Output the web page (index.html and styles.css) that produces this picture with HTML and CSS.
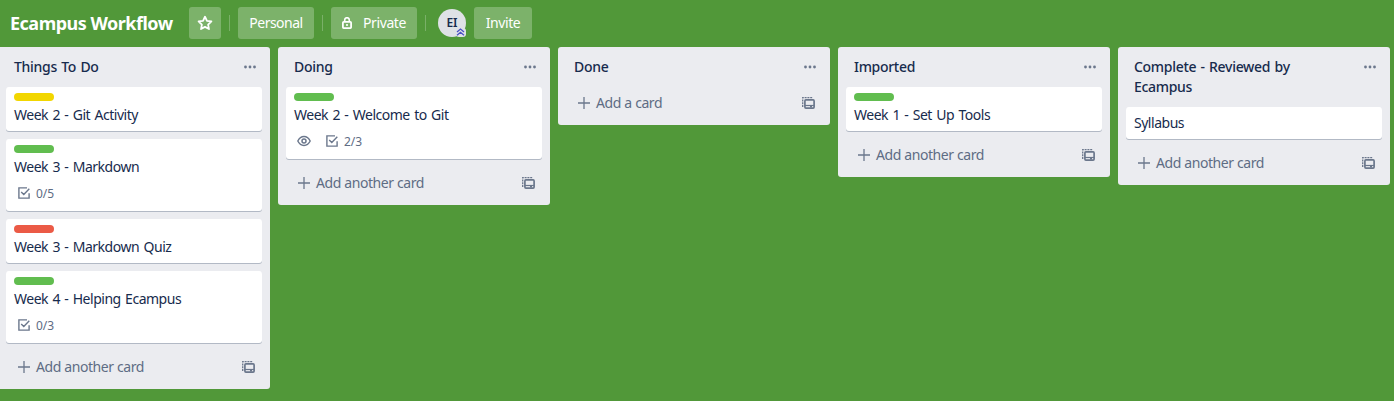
FILE: index.html
```html
<!DOCTYPE html>
<html lang="en">
<head>
<meta charset="utf-8">
<title>Ecampus Workflow</title>
<link rel="stylesheet" href="styles.css">
</head>
<body>
<svg class="defs" aria-hidden="true">
  <symbol id="check" viewBox="0 0 12 12"><path d="M9 .9H.9v10.2h10.2V6.2M3.2 4.9l2.600 2.600 5.500-5.800" fill="none" stroke="currentColor" stroke-width="1.400"/></symbol>
  <symbol id="eye" viewBox="0 0 14 12"><path d="M.8 6C2.200 3.200 4.400 1.500 7 1.500S11.800 3.200 13.200 6C11.800 8.800 9.600 10.500 7 10.500S2.200 8.800.8 6z" fill="none" stroke="currentColor" stroke-width="1.400"/><circle cx="7" cy="6" r="2" fill="none" stroke="currentColor" stroke-width="1.500"/></symbol>
  <symbol id="plus" viewBox="0 0 12 12"><path d="M6 0v12M0 6h12" stroke="currentColor" stroke-width="1.300"/></symbol>
  <symbol id="template" viewBox="0 0 13 12"><path d="M.7 10V.7H10.500" fill="none" stroke="currentColor" stroke-width="1.300" stroke-dasharray="2 .8"/><rect x="2.900" y="2.900" width="9.200" height="8.200" rx="1" fill="none" stroke="currentColor" stroke-width="1.700"/><path d="M3 8.500h9" stroke="currentColor" stroke-width="1.200"/><path d="M8 9h2v1.500H8z" fill="currentColor"/></symbol>
  <symbol id="dots" viewBox="0 0 14 4"><circle cx="2.500" cy="2" r="1.400" fill="currentColor"/><circle cx="7" cy="2" r="1.400" fill="currentColor"/><circle cx="11.500" cy="2" r="1.400" fill="currentColor"/></symbol>
</svg>
<header class="topbar">
  <h1 class="title">Ecampus Workflow</h1>
  <button class="btn star"><svg width="16" height="16" viewBox="0 0 14 14"><path d="M7 1.500l1.700 3.600 3.900.5-2.850 2.750.7 3.950L7 10.400l-3.450 1.900.7-3.950L1.400 5.600l3.900-.5z" fill="none" stroke="#fff" stroke-width="1.600" stroke-linejoin="round"/></svg></button>
  <span class="divider"></span>
  <button class="btn personal">Personal</button>
  <span class="divider"></span>
  <button class="btn private"><svg width="10" height="12" viewBox="0 0 10 12"><rect x=".9" y="4.900" width="8.200" height="6.200" rx=".8" fill="none" stroke="#fff" stroke-width="1.800"/><path d="M2.700 4.800V3a2.300 2.300 0 0 1 4.600 0v1.800" fill="none" stroke="#fff" stroke-width="1.600"/><circle cx="5" cy="8" r="1.100" fill="#fff"/></svg><span>Private</span></button>
  <span class="divider"></span>
  <div class="avatar">EI<span class="admin"><svg width="9" height="8" viewBox="0 0 9 8"><path d="M1 4l3.500-3L8 4M1 7.300l3.500-3 3.500 3" fill="none" stroke="#4a4fc4" stroke-width="1.300"/></svg></span></div>
  <button class="btn invite">Invite</button>
</header>
<main class="board">
  <section class="list">
    <div class="list-head"><h2>Things To Do</h2><svg class="menu"><use href="#dots"/></svg></div>
    <article class="card"><span class="label yellow"></span><p>Week 2 - Git Activity</p></article>
    <article class="card"><span class="label green"></span><p>Week 3 - Markdown</p><div class="badges"><svg class="check"><use href="#check"/></svg><span>0/5</span></div></article>
    <article class="card"><span class="label red"></span><p>Week 3 - Markdown Quiz</p></article>
    <article class="card"><span class="label green"></span><p>Week 4 - Helping Ecampus</p><div class="badges"><svg class="check"><use href="#check"/></svg><span>0/3</span></div></article>
    <div class="add"><svg class="plus"><use href="#plus"/></svg><span>Add another card</span><svg class="template"><use href="#template"/></svg></div>
  </section>
  <section class="list">
    <div class="list-head"><h2>Doing</h2><svg class="menu"><use href="#dots"/></svg></div>
    <article class="card"><span class="label green"></span><p>Week 2 - Welcome to Git</p><div class="badges"><svg class="eye"><use href="#eye"/></svg><svg class="check"><use href="#check"/></svg><span>2/3</span></div></article>
    <div class="add"><svg class="plus"><use href="#plus"/></svg><span>Add another card</span><svg class="template"><use href="#template"/></svg></div>
  </section>
  <section class="list">
    <div class="list-head"><h2>Done</h2><svg class="menu"><use href="#dots"/></svg></div>
    <div class="add"><svg class="plus"><use href="#plus"/></svg><span>Add a card</span><svg class="template"><use href="#template"/></svg></div>
  </section>
  <section class="list">
    <div class="list-head"><h2>Imported</h2><svg class="menu"><use href="#dots"/></svg></div>
    <article class="card"><span class="label green"></span><p>Week 1 - Set Up Tools</p></article>
    <div class="add"><svg class="plus"><use href="#plus"/></svg><span>Add another card</span><svg class="template"><use href="#template"/></svg></div>
  </section>
  <section class="list">
    <div class="list-head"><h2>Complete - Reviewed by Ecampus</h2><svg class="menu"><use href="#dots"/></svg></div>
    <article class="card"><p>Syllabus</p></article>
    <div class="add"><svg class="plus"><use href="#plus"/></svg><span>Add another card</span><svg class="template"><use href="#template"/></svg></div>
  </section>
</main>
</body>
</html>
```
FILE: styles.css
```css
* { box-sizing: border-box; }
body {
  margin: 0;
  height: 401px;
  overflow: hidden;
  background: #519839;
  color: #172b4d;
  font: 14px/20px "Segoe UI", "Noto Sans", sans-serif;
  letter-spacing: -0.45px;
}
h1, h2, p { margin: 0; }
svg { display: block; flex: none; }
.defs { position: absolute; width: 0; height: 0; }

.topbar { display: flex; align-items: center; height: 47px; padding: 0 0 1px 10px; }
.title { width: 179px; font-size: 18px; font-weight: 700; line-height: 24px; color: #fff; letter-spacing: -0.5px; white-space: nowrap; }
.btn {
  display: flex; align-items: center; justify-content: center;
  height: 32px; padding: 0; border: 0; border-radius: 3px;
  background: rgba(255, 255, 255, .25); color: #fff;
  font: inherit;
}
.star { width: 32px; }
.personal { width: 76px; letter-spacing: -0.5px; }
.private { width: 86px; gap: 11px; letter-spacing: -0.4px; }
.invite { width: 58px; margin-left: 8px; letter-spacing: -0.45px; }
.divider { width: 1px; height: 16px; margin: 0 8px; background: rgba(255, 255, 255, .24); }
.avatar {
  position: relative; width: 28px; height: 28px; margin-left: 4px;
  border-radius: 50%; background: #dfe1e6;
  font-size: 12px; font-weight: 600; line-height: 28px; text-align: center; letter-spacing: 0;
}
.admin { position: absolute; right: 0; bottom: 0; width: 10px; height: 9px; background: #dfe1e6; border-radius: 3px; }

.board { display: flex; align-items: flex-start; gap: 8px; margin-left: -2px; }
.list { flex: none; width: 272px; border-radius: 3px; background: #ebecf0; }
.list-head { display: flex; align-items: flex-start; justify-content: space-between; padding: 10px 13px 10px 16px; }
.list-head h2 { width: 190px; font-size: 14px; font-weight: 500; line-height: 20px; letter-spacing: -0.3px; word-spacing: 1px; }
.menu { width: 14px; height: 4px; margin-top: 8px; color: #6b778c; }
.card { margin: 0 8px 8px; padding: 6px 8px; border-radius: 3px; background: #fff; box-shadow: 0 1px 0 rgba(9, 30, 66, .25); }
.card p { letter-spacing: -0.48px; word-spacing: 1.2px; }
.label { display: block; width: 40px; height: 8px; margin-bottom: 4px; border-radius: 4px; }
.yellow { background: #f2d600; }
.green { background: #61bd4f; }
.red { background: #eb5a46; }
.badges { display: flex; align-items: center; height: 24px; margin-top: 4px; padding-left: 4px; color: #5e6c84; font-size: 12px; letter-spacing: 0; }
.badges span { padding-top: 1px; }
.check { width: 12px; height: 12px; margin-right: 6px; color: #6b778c; }
.eye { width: 14px; height: 12px; margin: 0 15px 0 -1px; color: #6b778c; }
.add { display: flex; align-items: center; height: 38px; padding: 0 15px 6px 20px; color: #5e6c84; }
.add span { word-spacing: .3px; }
.plus { width: 12px; height: 12px; margin-right: 6px; color: #6b778c; }
.template { width: 13px; height: 12px; margin-left: auto; color: #6b778c; }
```
